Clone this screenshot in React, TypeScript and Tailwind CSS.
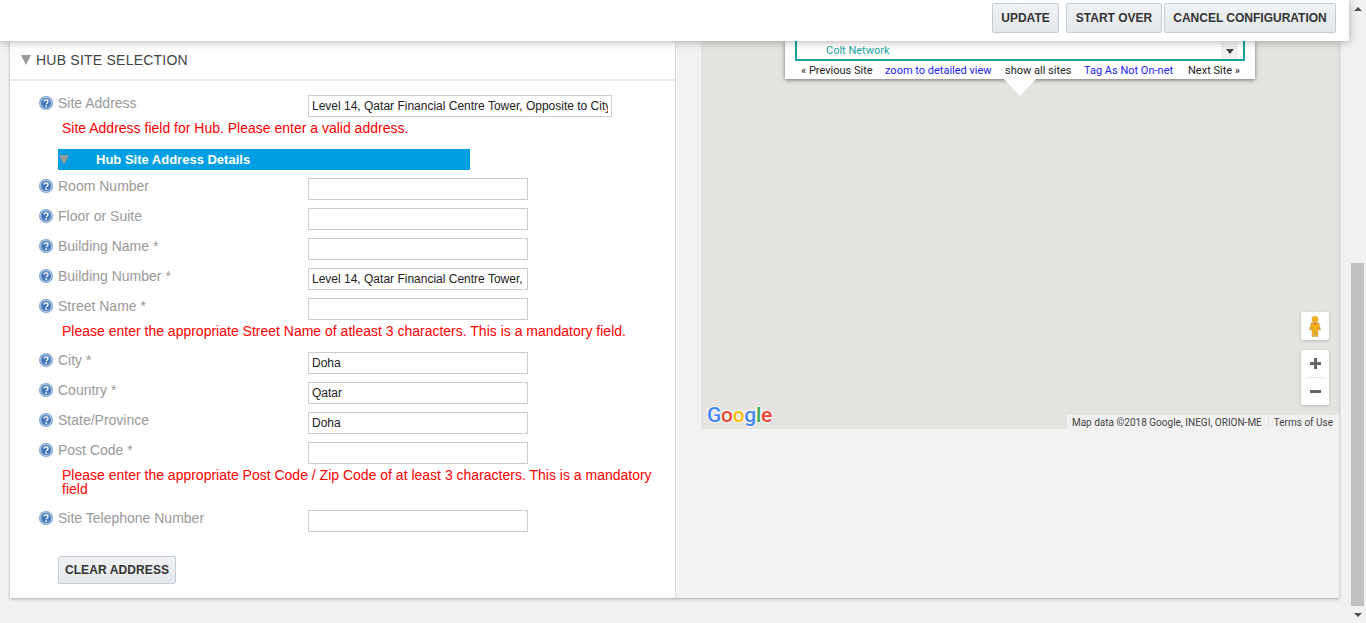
const Help = () => (
  <svg width="14" height="14" viewBox="0 0 14 14" className="shrink-0">
    <defs>
      <radialGradient id="helpBlue" cx="50%" cy="50%" r="50%">
        <stop offset="0%" stopColor="#3a6cb0" />
        <stop offset="62%" stopColor="#4a7cbc" />
        <stop offset="78%" stopColor="#a8c2e0" />
        <stop offset="100%" stopColor="#6f9acc" />
      </radialGradient>
    </defs>
    <circle cx="7" cy="7" r="7" fill="url(#helpBlue)" />
    <path d="M5.200 5.600c0-2.300 3.800-2.300 3.800 0 0 1.400-1.700 1.400-1.700 2.700" fill="none" stroke="#fff" strokeWidth="1.400" />
    <rect x="6.400" y="9.200" width="1.600" height="1.600" fill="#fff" />
  </svg>
);

const Caret = () => (
  <span className="block h-0 w-0 border-x-[5px] border-t-[10px] border-x-transparent border-t-[#999]" />
);

const Row = ({ label, value = "" }: { label: string; value?: string }) => (
  <div className="flex h-[22px] items-start">
    <div className="mt-[1px] flex w-[298px] items-start pl-[29px]">
      <Help />
      <span className="ml-[5px] -mt-[1px] text-[14px] leading-[16px] text-[#999]">{label}</span>
    </div>
    <input
      readOnly
      value={value}
      className="h-[22px] w-[220px] border border-[#ccc] bg-white px-[3px] text-[12px] text-[#222] outline-none"
    />
  </div>
);

const Err = ({ children }: { children: string }) => (
  <p className="ml-[52px] w-[600px] text-[14px] leading-[14px] text-[#f00]">{children}</p>
);

const Btn = ({ children, width }: { children: string; width: string }) => (
  <button className={`h-[30px] rounded-[2px] border border-[#c3ced8] bg-gradient-to-b from-[#f0f2f4] to-[#e3e7eb] text-[12px] font-bold text-[#333] ${width}`}>
    {children}
  </button>
);

export default function App() {
  return (
    <div className="flex h-[623px] overflow-hidden bg-[#f1f1f1] font-['Liberation_Sans',Arial,sans-serif]">
      <div className="flex w-[1349px] flex-col">
        <header className="relative z-20 flex h-[41px] shrink-0 items-start justify-end bg-white pt-[3px] pr-[13px] shadow-[0_1px_8px_rgba(0,0,0,0.3)]">
          <Btn width="w-[67px]">UPDATE</Btn>
          <div className="ml-[7px] flex gap-[2px]">
            <Btn width="w-[96px]">START OVER</Btn>
            <Btn width="w-[172px]">CANCEL CONFIGURATION</Btn>
          </div>
        </header>

        <main className="mx-[10px] flex h-[557px] bg-[#f2f2f2] shadow-[0_1px_3px_rgba(0,0,0,0.3)]">
          <section className="w-[666px] shrink-0 border-r border-[#ddd] bg-white">
            <div className="flex h-[40px] items-center border-b-2 border-[#e8e8e8] pl-[11px]">
              <Caret />
              <h2 className="ml-[5px] text-[14px] tracking-[0.23px] text-[#444]">HUB SITE SELECTION</h2>
            </div>

            <div className="pt-[14px]">
              <div className="flex h-[22px] items-start">
                <div className="mt-[1px] flex w-[298px] items-start pl-[29px]">
                  <Help />
                  <span className="ml-[5px] -mt-[1px] text-[14px] leading-[16px] text-[#999]">Site Address</span>
                </div>
                <input
                  readOnly
                  value="Level 14, Qatar Financial Centre Tower, Opposite to City Center"
                  className="h-[22px] w-[304px] border border-[#ccc] bg-white px-[3px] text-[12px] text-[#222] outline-none"
                />
              </div>
              <p className="mt-[3px] ml-[52px] text-[14px] leading-[16px] text-[#f00]">
                Site Address field for Hub. Please enter a valid address.
              </p>

              <div className="mt-[13px] ml-[48px] flex h-[21px] w-[412px] items-center bg-[#009fe3]">
                <span className="ml-[1px]"><Caret /></span>
                <span className="ml-[27px] text-[13px] font-bold text-white">Hub Site Address Details</span>
              </div>

              <div className="mt-[8px] flex flex-col gap-[8px]">
                <Row label="Room Number" />
                <Row label="Floor or Suite" />
                <Row label="Building Name *" />
                <Row label="Building Number *" value="Level 14, Qatar Financial Centre Tower, Opposite" />
                <div>
                  <Row label="Street Name *" />
                  <div className="mt-[4px] mb-[6px]">
                    <Err>Please enter the appropriate Street Name of atleast 3 characters. This is a mandatory field.</Err>
                  </div>
                </div>
                <Row label="City *" value="Doha" />
                <Row label="Country *" value="Qatar" />
                <Row label="State/Province" value="Doha" />
                <div>
                  <Row label="Post Code *" />
                  <div className="mt-[4px]">
                    <Err>Please enter the appropriate Post Code / Zip Code of at least 3 characters. This is a mandatory field</Err>
                  </div>
                </div>
                <div className="mt-[6px]">
                  <Row label="Site Telephone Number" />
                </div>
              </div>

              <button className="mt-[24px] ml-[48px] h-[28px] w-[118px] rounded-[2px] border border-[#c3ced8] bg-gradient-to-b from-[#f0f2f4] to-[#e3e7eb] text-[12px] font-bold tracking-[0.1px] text-[#333]">
                CLEAR ADDRESS
              </button>
            </div>
          </section>

          <section className="flex-1 pl-[25px]">
            <div className="relative z-0 h-[388px] bg-[#e5e3df] font-['Roboto',sans-serif]">
              <div className="absolute top-0 left-[84px] h-[38px] w-[470px] bg-white shadow-[0_1px_4px_rgba(0,0,0,0.5)]">
                <div className="mx-[10px] flex h-[20px] items-end justify-between border-x-2 border-b-2 border-[#1aa59a] pb-[1px] pl-[29px] pr-[5px]">
                  <span className="text-[11px] leading-[14px] text-[#1aa59a]">Colt Network</span>
                  <span className="mb-[-1px] flex h-[16px] w-[17px] items-center justify-center bg-[#f0f0f0]">
                    <span className="h-0 w-0 border-x-[4px] border-t-[5px] border-x-transparent border-t-[#444]" />
                  </span>
                </div>
                <div className="flex h-[20px] items-center pl-[16px] text-[11px] text-[#222]">
                  <span className="w-[84px]">« Previous Site</span>
                  <span className="w-[120px] text-[#2222ee]">zoom to detailed view</span>
                  <span className="w-[79px]">show all sites</span>
                  <span className="w-[104px] text-[#2222ee]">Tag As Not On-net</span>
                  <span>Next Site »</span>
                </div>
              </div>
              <span className="absolute top-[38px] left-[303px] h-0 w-0 border-x-[16px] border-t-[17px] border-x-transparent border-t-white" />

              <div className="absolute top-[271px] right-[10px] flex h-[28px] w-[28px] items-center justify-center rounded-[2px] bg-white shadow-[0_1px_3px_rgba(0,0,0,0.2)]">
                <svg width="14" height="21" viewBox="0 0 14 21">
                  <circle cx="7" cy="3.300" r="3" fill="#f7b21a" stroke="#b58a2a" strokeWidth="0.500" />
                  <path d="M3.300 6.800h7.400l1.800 7.200h-1.700L10 11l-.2 9.500H7.500L7 14.500l-.5 6H4.200L4 11l-.8 3H1.500z" fill="#f7b21a" stroke="#a88438" strokeWidth="0.500" />
                  <path d="M5.500 7 7 9.500 8.500 7z" fill="#e5632a" />
                </svg>
              </div>

              <div className="absolute top-[309px] right-[10px] flex h-[55px] w-[28px] flex-col items-center rounded-[2px] bg-white shadow-[0_1px_3px_rgba(0,0,0,0.2)]">
                <span className="flex h-[27px] items-center">
                  <svg width="11" height="11" viewBox="0 0 11 11" fill="#666">
                    <rect x="4" y="0" width="3" height="11" />
                    <rect x="0" y="4" width="11" height="3" />
                  </svg>
                </span>
                <span className="h-px w-[19px] bg-[#e6e6e6]" />
                <span className="flex h-[27px] items-center">
                  <svg width="11" height="3" viewBox="0 0 11 3" fill="#666">
                    <rect width="11" height="3" />
                  </svg>
                </span>
              </div>

              <div className="absolute bottom-[1px] left-[6px] text-[21px] leading-[26px] font-medium tracking-[-0.3px] [text-shadow:0_0_2px_#fff,0_0_2px_#fff,0_0_3px_#fff]">
                <span className="text-[#4285f4]">G</span>
                <span className="text-[#ea4335]">o</span>
                <span className="text-[#fbbc05]">o</span>
                <span className="text-[#4285f4]">g</span>
                <span className="text-[#34a853]">l</span>
                <span className="text-[#ea4335]">e</span>
              </div>

              <div className="absolute right-0 bottom-0 flex h-[14px] items-center bg-[#f1f1f1] text-[10px] text-[#444]">
                <span className="pl-[5px] pr-[6px]">Map data ©2018 Google, INEGI, ORION-ME</span>
                <span className="border-l border-[#e5e3df] pl-[5px] pr-[6px]">Terms of Use</span>
              </div>
            </div>
          </section>
        </main>
      </div>

      <aside className="flex w-[17px] flex-col bg-[#f1f1f1] px-[2px]">
        <div className="flex h-[17px] items-center justify-center">
          <span className="h-0 w-0 border-x-[4px] border-b-[4px] border-x-transparent border-b-[#505050]" />
        </div>
        <div className="mt-[246px] h-[343px] bg-[#c1c1c1]" />
        <div className="flex h-[17px] items-center justify-center">
          <span className="h-0 w-0 border-x-[4px] border-t-[4px] border-x-transparent border-t-[#505050]" />
        </div>
      </aside>
    </div>
  );
}
